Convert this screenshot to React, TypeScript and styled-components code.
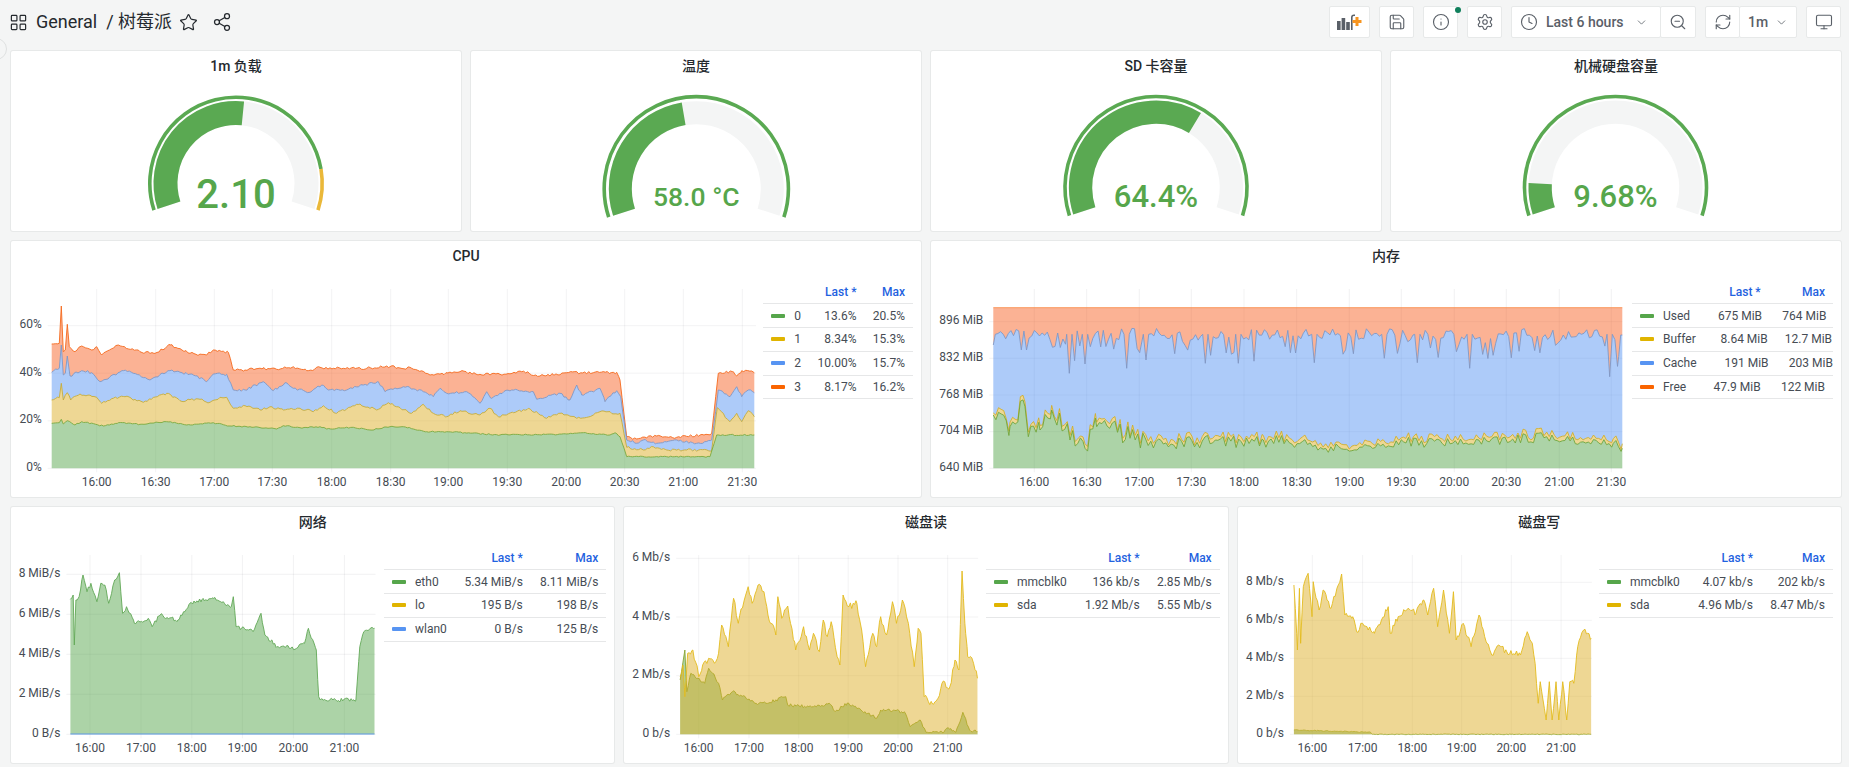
import React from "react";
import styled, { createGlobalStyle } from "styled-components";
import { ChevronDown, Clock, Info, LayoutGrid, Monitor, RefreshCw, Save, Settings, Share2, Star, ZoomOut } from "lucide-react";

const FONT = `Roboto, "Noto Sans CJK SC", "Liberation Sans", sans-serif`;
const GREEN = "#56A64B";
const YELLOW = "#E0B400";
const BLUE = "#5794F2";
const RED = "#FA6400";
const YELLOW_FILL = "#DCAD25";
const RED_FILL = "#F76225";

const Global = createGlobalStyle`
  html, body { margin: 0; padding: 0; background: #F4F5F5; }
  body { font-family: ${FONT}; color: #24292E; overflow: hidden; }
`;

const Page = styled.div`
  position: relative;
  width: 1849px;
  height: 767px;
  box-sizing: border-box;
  padding: 0 8px 0 11px;
  overflow: hidden;
  background: #F4F5F5;
  display: flex;
  flex-direction: column;
`;
const SideToggle = styled.div`
  position: absolute;
  left: -15px;
  top: 38px;
  width: 20px;
  height: 20px;
  border-radius: 50%;
  border: 1px solid #dfe1e1;
  background: #F4F5F5;
`;
const Header = styled.header`
  height: 51px;
  flex: none;
  display: flex;
  align-items: flex-start;
`;
const Crumbs = styled.div`
  display: flex;
  align-items: center;
  height: 44px;
  color: #24292E;
`;
const CrumbIcon = styled.span<{ $ml: number }>`
  display: inline-flex;
  margin-left: ${(p) => p.$ml}px;
  color: #24292E;
`;
const CrumbTitle = styled.div`
  font-size: 18px;
  line-height: 24px;
  white-space: pre;
  margin-left: 8px;
`;
const Tools = styled.div`
  margin-left: auto;
  margin-top: 6px;
  display: flex;
  gap: 9px;
`;
const ToolGroup = styled.div`
  display: flex;
`;
const ToolButton = styled.div<{ $w: number; $joined?: boolean; $start?: boolean }>`
  position: relative;
  box-sizing: border-box;
  width: ${(p) => p.$w}px;
  height: 32px;
  background: #fff;
  border: 1px solid #e7e9e9;
  border-radius: 2px;
  margin-left: ${(p) => (p.$joined ? "-1px" : "0")};
  padding-left: ${(p) => (p.$start ? "8px" : "0")};
  display: flex;
  align-items: center;
  justify-content: ${(p) => (p.$start ? "flex-start" : "center")};
  gap: 7px;
  color: #5a6068;
  font-size: 14px;
  font-weight: 500;
`;
const ToolText = styled.span<{ $ml?: number; $mr?: number }>`
  margin: 0 ${(p) => p.$mr ?? 0}px 0 ${(p) => p.$ml ?? 0}px;
  white-space: nowrap;
`;
const StatusDot = styled.span`
  position: absolute;
  right: -4px;
  top: 0;
  width: 6px;
  height: 6px;
  border-radius: 50%;
  background: #10805c;
`;
const Rows = styled.main`
  display: flex;
  flex-direction: column;
  gap: 10px;
`;
const Row = styled.div<{ $cols: number; $h: number }>`
  display: grid;
  grid-template-columns: repeat(${(p) => p.$cols}, minmax(0, 1fr));
  gap: 10px;
  height: ${(p) => p.$h}px;
  flex: none;
`;
const Panel = styled.section`
  position: relative;
  background: #fff;
  border-radius: 2px;
  box-shadow: 0 0 0 1px #e7e9e9;
  display: flex;
  flex-direction: column;
  min-width: 0;
`;
const PanelTitle = styled.h2`
  margin: 0 0 2px;
  height: 30px;
  flex: none;
  line-height: 20px;
  display: flex;
  align-items: center;
  justify-content: center;
  font-size: 14px;
  font-weight: 500;
  color: #24292E;
`;
const ChartBody = styled.div`
  display: flex;
  flex: 1;
  min-height: 0;
  padding-right: 8px;
`;
const ChartSvg = styled.svg`
  flex: none;
  display: block;
  text {
    font-family: ${FONT};
    font-size: 12px;
    fill: #464C54;
  }
`;
const GaugeSvg = styled.svg`
  display: block;
  text {
    font-family: ${FONT};
    font-weight: 500;
    fill: ${GREEN};
    text-anchor: middle;
  }
`;
const Legend = styled.div`
  flex: 1;
  min-width: 0;
  margin-top: 7px;
  font-size: 12px;
  color: #464C54;
`;
const LegendRow = styled.div<{ $cols: string; $head?: boolean }>`
  display: grid;
  grid-template-columns: ${(p) => p.$cols};
  align-items: center;
  box-sizing: border-box;
  height: ${(p) => (p.$head ? "24.3px" : "23.75px")};
  padding: 0 8px;
  border-bottom: 1px solid #e6e7e8;
  color: ${(p) => (p.$head ? "#1F62E0" : "#464C54")};
  font-weight: ${(p) => (p.$head ? 500 : 400)};
`;
const LegendName = styled.div`
  display: flex;
  align-items: center;
  gap: 9px;
  white-space: nowrap;
`;
const Swatch = styled.i<{ $color: string }>`
  display: block;
  width: 14px;
  height: 4px;
  background: ${(p) => p.$color};
  border-radius: 1px;
`;
const Num = styled.div`
  text-align: right;
  white-space: nowrap;
`;

type Pt = [number, number];

function rng(seed: number) {
  let a = seed >>> 0;
  return () => {
    a = (a + 0x6d2b79f5) >>> 0;
    let t = a;
    t = Math.imul(t ^ (t >>> 15), t | 1);
    t ^= t + Math.imul(t ^ (t >>> 7), t | 61);
    return ((t ^ (t >>> 14)) >>> 0) / 4294967296;
  };
}

interface TraceOpts {
  sx: number; // zoom x per page px
  ox: number; // page x origin
  oy: number; // page y origin
  step?: number;
  amp?: number | ((x: number) => number);
  seed?: number;
  dip?: number;
  dipDepth?: number;
}

// Control points are read off the reference; a light seeded jitter fills in between them.
function trace(ctrl: number[][], o: TraceOpts): Pt[] {
  const pts: Pt[] = ctrl.map(([x, y]) => [o.ox + x / o.sx, o.oy + y / 3]);
  const step = o.step ?? 2.5;
  const rand = rng(o.seed ?? 1);
  const out: Pt[] = [];
  for (let i = 0; i < pts.length - 1; i++) {
    const [x0, y0] = pts[i];
    const [x1, y1] = pts[i + 1];
    out.push([x0, y0]);
    for (let x = x0 + step; x < x1 - step * 0.4; x += step) {
      const amp = typeof o.amp === "function" ? o.amp(x) : o.amp ?? 0.6;
      let y = y0 + ((x - x0) / (x1 - x0)) * (y1 - y0) + (rand() - 0.5) * 2 * amp;
      if (o.dip && rand() < o.dip) y += rand() * (o.dipDepth ?? 10);
      out.push([x, y]);
    }
  }
  out.push(pts[pts.length - 1]);
  return out;
}

const linePath = (p: Pt[]) => p.map(([x, y], i) => `${i ? "L" : "M"}${x.toFixed(1)} ${y.toFixed(1)}`).join("");
const areaPath = (up: Pt[], low: Pt[]) =>
  linePath(up) + [...low].reverse().map(([x, y]) => `L${x.toFixed(1)} ${y.toFixed(1)}`).join("") + "Z";

interface Series {
  color: string;
  line: string;
  points: Pt[];
  lower?: Pt[];
  fill?: boolean;
}
interface ChartDef {
  title: string;
  left: number;
  top: number;
  svgWidth: number;
  x0: number;
  x1: number;
  gridRight: number;
  gridTop: number;
  y0: number;
  xLabelY: number;
  yTicks: [string, number][];
  xTicks: [string, number][];
  series: Series[];
  legendCols: string;
  legend: { name: string; color: string; last: string; max: string }[];
}

const Chart: React.FC<{ def: ChartDef }> = ({ def }) => {
  const h = 224;
  const vb = `${def.left} ${def.top + 32} ${def.svgWidth} ${h}`;
  return (
    <Panel>
      <PanelTitle>{def.title}</PanelTitle>
      <ChartBody>
        <ChartSvg width={def.svgWidth} height={h} viewBox={vb}>
          {def.yTicks.map(([t, y]) => (
            <g key={t}>
              <line x1={def.x0 - 4} x2={def.gridRight} y1={y} y2={y} stroke="#24292E" strokeOpacity={0.06} />
              <text x={def.x0 - 10} y={y + 2.6} textAnchor="end">{t}</text>
            </g>
          ))}
          {def.xTicks.map(([t, x]) => (
            <g key={t}>
              <line x1={x} x2={x} y1={def.gridTop} y2={def.y0 + 4} stroke="#24292E" strokeOpacity={0.06} />
              <text x={x} y={def.xLabelY} textAnchor="middle">{t}</text>
            </g>
          ))}
          {def.series.map((s, i) => {
            const base: Pt[] = s.lower ?? [[s.points[0][0], def.y0], [s.points[s.points.length - 1][0], def.y0]];
            return (
              <g key={i}>
                {s.fill !== false && <path d={areaPath(s.points, base)} fill={s.color} fillOpacity={0.49} />}
                <path d={linePath(s.points)} fill="none" stroke={s.line} strokeWidth={0.9} />
              </g>
            );
          })}
        </ChartSvg>
        <Legend>
          <LegendRow $cols={def.legendCols} $head>
            <span />
            <Num>Last *</Num>
            <Num>Max</Num>
          </LegendRow>
          {def.legend.map((l) => (
            <LegendRow key={l.name} $cols={def.legendCols}>
              <LegendName><Swatch $color={l.color} />{l.name}</LegendName>
              <Num>{l.last}</Num>
              <Num>{l.max}</Num>
            </LegendRow>
          ))}
        </Legend>
      </ChartBody>
    </Panel>
  );
};

const polar = (cx: number, cy: number, r: number, deg: number): Pt => {
  const a = (deg * Math.PI) / 180;
  return [cx + r * Math.sin(a), cy - r * Math.cos(a)];
};
const arc = (cx: number, cy: number, r: number, a0: number, a1: number) => {
  const [x0, y0] = polar(cx, cy, r, a0);
  const [x1, y1] = polar(cx, cy, r, a1);
  return `M${x0} ${y0}A${r} ${r} 0 ${a1 - a0 > 180 ? 1 : 0} 1 ${x1} ${y1}`;
};

interface GaugeDef {
  title: string;
  left: number;
  cx: number;
  cy: number;
  rTh: number;
  rVal: number;
  wVal: number;
  frac: number;
  warnFrac?: number;
  value: string;
  size: number;
  baseline: number;
}
const Gauge: React.FC<{ def: GaugeDef }> = ({ def }) => {
  const A0 = -108;
  const SWEEP = 216;
  const at = (f: number) => A0 + SWEEP * f;
  const { cx, cy } = def;
  return (
    <Panel>
      <PanelTitle>{def.title}</PanelTitle>
      <GaugeSvg width={450} height={148} viewBox={`${def.left} 83 450 148`}>
        <path d={arc(cx, cy, def.rVal, A0, at(1))} fill="none" stroke="#F4F5F5" strokeWidth={def.wVal} />
        <path d={arc(cx, cy, def.rVal, A0, at(def.frac))} fill="none" stroke="#5AA952" strokeWidth={def.wVal} />
        <path d={arc(cx, cy, def.rTh, A0, at(def.warnFrac ?? 1))} fill="none" stroke="#5AA952" strokeWidth={3.6} />
        {def.warnFrac !== undefined && (
          <path d={arc(cx, cy, def.rTh, at(def.warnFrac), at(1))} fill="none" stroke="#EAB839" strokeWidth={3.6} />
        )}
        <text x={cx} y={def.baseline} fontSize={def.size}>{def.value}</text>
      </GaugeSvg>
    </Panel>
  );
};

const gauges: GaugeDef[] = [
  { title: "1m 负载", left: 11, cx: 236, cy: 183.5, rTh: 86.2, rVal: 70.5, wVal: 24, frac: 0.526, warnFrac: 0.872, value: "2.10", size: 40, baseline: 208.3 },
  { title: "温度", left: 471, cx: 696.3, cy: 188.7, rTh: 92.1, rVal: 76, wVal: 23, frac: 0.4556, value: "58.0 °C", size: 26.5, baseline: 205.7 },
  { title: "SD 卡容量", left: 931, cx: 1156, cy: 187.5, rTh: 91, rVal: 75.4, wVal: 23.3, frac: 0.644, value: "64.4%", size: 31, baseline: 206.7 },
  { title: "机械硬盘容量", left: 1391, cx: 1615.5, cy: 187.5, rTh: 91, rVal: 75.4, wVal: 23.3, frac: 0.0968, value: "9.68%", size: 31, baseline: 206.7 },
];

/* ---------- CPU ---------- */
const cpuO = { sx: 3, ox: 0, oy: 240, step: 2 };
const cpuRed = trace([[155,312],[178,310],[184,198],[190,335],[196,330],[202,253],[208,320],[225,335],[245,318],[275,330],[290,320],[305,345],[355,315],[420,335],[465,340],[510,315],[570,340],[620,345],[640,330],[685,337],[700,390],[735,390],[750,385],[830,388],[880,380],[920,392],[960,382],[1000,385],[1100,385],[1170,380],[1235,385],[1290,405],[1380,395],[1440,403],[1500,403],[1565,395],[1620,408],[1700,398],[1780,398],[1850,397],[1860,420],[1880,590],[1910,597],[1970,588],[2030,592],[2100,585],[2135,580],[2155,400],[2200,395],[2210,408],[2225,392],[2263,398]], { ...cpuO, seed: 11, amp: 1.3 });
const cpuBlue = trace([[155,397],[178,385],[184,315],[190,405],[196,400],[202,348],[210,408],[245,392],[275,398],[300,425],[330,410],[370,392],[400,400],[450,420],[510,392],[580,405],[620,425],[640,402],[680,403],[700,450],[735,450],[790,425],[820,452],[855,428],[880,445],[930,457],[965,435],[985,450],[1040,450],[1090,435],[1135,425],[1155,455],[1210,440],[1270,455],[1300,470],[1320,445],[1340,460],[1400,455],[1440,490],[1460,455],[1475,475],[1500,460],[1535,450],[1600,455],[1610,478],[1680,460],[1710,480],[1730,435],[1745,465],[1800,445],[1815,485],[1850,452],[1862,470],[1880,600],[1910,610],[1930,600],[1970,610],[2030,600],[2090,610],[2135,600],[2155,450],[2190,470],[2210,440],[2225,470],[2245,450],[2263,458]], { ...cpuO, seed: 12, amp: 1.3 });
const cpuYellow = trace([[155,480],[178,473],[184,430],[190,480],[202,458],[212,480],[240,462],[290,472],[305,490],[340,475],[375,470],[430,487],[500,460],[540,482],[600,478],[630,487],[660,472],[680,472],[700,505],[735,497],[780,510],[810,500],[850,510],[900,505],[940,515],[970,497],[1010,520],[1040,507],[1080,492],[1130,510],[1165,488],[1200,503],[1235,520],[1270,493],[1300,520],[1340,530],[1380,512],[1440,525],[1470,505],[1495,530],[1540,518],[1585,505],[1640,535],[1680,520],[1730,535],[1780,525],[1800,515],[1860,520],[1880,622],[1930,630],[1960,620],[2000,630],[2060,630],[2135,630],[2152,503],[2190,545],[2210,520],[2225,545],[2245,512],[2263,530]], { ...cpuO, seed: 13, amp: 1.2 });
const cpuGreen = trace([[155,550],[178,548],[184,538],[190,552],[202,542],[225,555],[245,545],[310,558],[355,548],[420,553],[500,545],[560,555],[640,548],[690,558],[750,560],[830,567],[850,557],[900,563],[960,560],[980,567],[1060,562],[1110,570],[1170,560],[1210,560],[1280,575],[1340,575],[1500,585],[1540,583],[1600,585],[1700,582],[1750,578],[1830,585],[1845,578],[1860,590],[1880,650],[2000,650],[2100,650],[2130,650],[2150,585],[2263,585]], { ...cpuO, seed: 14, amp: 0.6 });

/* ---------- Memory ---------- */
const memO = { sx: 3, ox: 930, oy: 240, step: 2.6 };
const memDips: Pt[] = [[418,400],[465,372],[590,385],[648,360],[826,370],[925,370],[1153,368],[1363,355],[1462,368],[1619,385],[2039,410]];
const memBlueCtrl: number[][] = [[190,315],[196,283]];
memDips.forEach(([x, y]) => memBlueCtrl.push([x - 8, 283], [x, y], [x + 8, 283]));
memBlueCtrl.push([2066,350],[2072,285],[2077,285]);
const memBlue = trace(memBlueCtrl, { ...memO, seed: 21, amp: 6, dip: 0.3, dipDepth: 24 });
const memGreen = trace([[190,525],[240,560],[285,500],[295,590],[330,570],[365,510],[420,600],[465,625],[500,560],[600,595],[700,612],[1000,600],[1250,628],[1420,605],[1600,612],[1850,590],[2050,610],[2077,625]], { ...memO, seed: 22, amp: (x) => (x < 1150 ? 12 : x < 1300 ? 7 : 5) });
const memYellow: Pt[] = memGreen.map(([x, y], i) => [x, y - (i % 5 === 0 ? 2 : 4.6)]);
const memRedY = 240 + 203 / 3;
const memRed: Pt[] = [[930 + 190 / 3, memRedY], [1622.3, memRedY]];

/* ---------- Bottom row ---------- */
const netO = { sx: 2.529, ox: 0, oy: 500, step: 1.4 };
const netGreen = trace([[178,298],[185,285],[188,435],[192,300],[200,290],[210,225],[220,275],[230,250],[245,305],[255,250],[265,255],[275,310],[290,240],[302,218],[310,340],[320,320],[340,370],[375,355],[385,380],[405,345],[450,360],[480,310],[510,300],[540,295],[585,320],[590,290],[597,380],[640,395],[660,340],[670,405],[700,440],[750,445],[770,430],[780,385],[800,450],[806,590],[810,600],[900,600],[910,440],[920,395],[947,385]], { ...netO, seed: 31, amp: 2 });
const netBlue: Pt[] = [[70.4, 734], [374.5, 734]];

const readO = { sx: 2.529, ox: 620, oy: 500, step: 1.4 };
const readYellow = trace([[153,530],[160,495],[165,590],[172,460],[185,450],[200,530],[210,495],[225,475],[240,490],[250,460],[258,375],[275,440],[288,295],[300,370],[315,300],[325,260],[335,310],[350,255],[365,275],[375,345],[395,405],[400,290],[410,355],[425,318],[445,450],[465,380],[480,450],[490,400],[505,455],[515,360],[525,410],[535,365],[550,470],[557,495],[565,285],[580,320],[600,310],[612,390],[622,500],[640,400],[650,440],[660,350],[675,405],[690,305],[700,370],[715,300],[730,370],[745,500],[755,385],[762,400],[770,590],[790,610],[805,595],[815,550],[835,560],[848,480],[858,510],[866,213],[875,400],[880,470],[895,490],[905,535]], { ...readO, seed: 41, amp: 3.5 });
const readGreen = trace([[153,540],[165,450],[170,575],[180,520],[215,550],[225,505],[235,520],[250,550],[260,600],[285,575],[345,610],[370,610],[420,590],[425,615],[490,620],[530,610],[545,635],[575,610],[610,630],[650,655],[660,630],[720,635],[735,680],[760,660],[775,697],[820,697],[827,685],[850,697],[868,637],[885,690],[905,695]], { ...readO, seed: 42, amp: 1.6 });

const writeO = { sx: 2.533, ox: 1230, oy: 500, step: 1.4 };
const writeYellow = trace([[161,255],[170,450],[175,265],[178,430],[185,260],[197,220],[207,350],[210,245],[225,330],[235,270],[245,300],[255,325],[270,265],[282,222],[290,345],[310,350],[320,395],[335,370],[365,400],[400,320],[405,400],[425,350],[450,325],[470,340],[490,300],[500,345],[515,265],[525,380],[540,270],[555,400],[565,275],[572,420],[590,370],[610,440],[630,345],[650,430],[662,465],[680,435],[700,455],[735,465],[752,395],[765,430],[772,490],[780,610],[785,545],[800,660],[808,545],[815,660],[825,545],[832,660],[842,545],[852,660],[860,545],[870,550],[880,440],[895,390],[905,400],[914,415]], { ...writeO, seed: 51, amp: 3 });
const writeGreen = trace([[161,690],[355,697],[360,703],[914,703]], { ...writeO, seed: 52, amp: 0.4 });

const fullWide: ChartDef[] = [
  {
    title: "CPU", left: 11, top: 241, svgWidth: 752.3, x0: 51.7, x1: 754.3, gridRight: 756, gridTop: 289, y0: 468.3, xLabelY: 486,
    yTicks: [["0%", 468.3], ["20%", 420.8], ["40%", 373.2], ["60%", 325.7]],
    xTicks: [["16:00", 96.7], ["16:30", 155.7], ["17:00", 214.3], ["17:30", 272.3], ["18:00", 331.7], ["18:30", 390.7], ["19:00", 448.3], ["19:30", 507.3], ["20:00", 566.3], ["20:30", 624.7], ["21:00", 683.3], ["21:30", 742.3]],
    series: [
      { color: RED_FILL, line: "#F56A1D", points: cpuRed, lower: cpuBlue },
      { color: BLUE, line: "#7F96C4", points: cpuBlue, lower: cpuYellow },
      { color: YELLOW_FILL, line: "#C4AC3C", points: cpuYellow, lower: cpuGreen },
      { color: GREEN, line: "#7CA83C", points: cpuGreen },
    ],
    legendCols: "1fr 48px 48.5px",
    legend: [
      { name: "0", color: GREEN, last: "13.6%", max: "20.5%" },
      { name: "1", color: YELLOW, last: "8.34%", max: "15.3%" },
      { name: "2", color: BLUE, last: "10.00%", max: "15.7%" },
      { name: "3", color: RED, last: "8.17%", max: "16.2%" },
    ],
  },
  {
    title: "内存", left: 931, top: 241, svgWidth: 701, x0: 993.3, x1: 1622.3, gridRight: 1622.3, gridTop: 289, y0: 468.3, xLabelY: 486,
    yTicks: [["640 MiB", 468.3], ["704 MiB", 431.7], ["768 MiB", 395], ["832 MiB", 358.3], ["896 MiB", 321.7]],
    xTicks: [["16:00", 1034.3], ["16:30", 1086.7], ["17:00", 1139.3], ["17:30", 1191.3], ["18:00", 1244], ["18:30", 1296.7], ["19:00", 1349.3], ["19:30", 1401.3], ["20:00", 1454.3], ["20:30", 1506.3], ["21:00", 1559.3], ["21:30", 1611.3]],
    series: [
      { color: RED_FILL, line: "#F9904F", points: memRed, lower: memBlue },
      { color: BLUE, line: "#7F96C4", points: memBlue, lower: memYellow },
      { color: YELLOW_FILL, line: "#CFAE2E", points: memYellow, lower: memGreen },
      { color: GREEN, line: "#6EA53A", points: memGreen },
    ],
    legendCols: "1fr 72px 64.3px",
    legend: [
      { name: "Used", color: GREEN, last: "675 MiB", max: "764 MiB" },
      { name: "Buffer", color: YELLOW, last: "8.64 MiB", max: "12.7 MiB" },
      { name: "Cache", color: BLUE, last: "191 MiB", max: "203 MiB" },
      { name: "Free", color: RED, last: "47.9 MiB", max: "122 MiB" },
    ],
  },
];

const thirds: ChartDef[] = [
  {
    title: "网络", left: 11, top: 507, svgWidth: 373, x0: 70.4, x1: 374.5, gridRight: 375.5, gridTop: 555, y0: 734.3, xLabelY: 752,
    yTicks: [["0 B/s", 734.3], ["2 MiB/s", 694.3], ["4 MiB/s", 654.3], ["6 MiB/s", 614.3], ["8 MiB/s", 574.3]],
    xTicks: [["16:00", 90], ["17:00", 141], ["18:00", 191.8], ["19:00", 242.4], ["20:00", 293.4], ["21:00", 344.4]],
    series: [
      { color: GREEN, line: "#62A857", points: netGreen },
      { color: BLUE, line: BLUE, points: netBlue, fill: false },
    ],
    legendCols: "1fr 70px 75.5px",
    legend: [
      { name: "eth0", color: GREEN, last: "5.34 MiB/s", max: "8.11 MiB/s" },
      { name: "lo", color: YELLOW, last: "195 B/s", max: "198 B/s" },
      { name: "wlan0", color: BLUE, last: "0 B/s", max: "125 B/s" },
    ],
  },
  {
    title: "磁盘读", left: 624.33, top: 507, svgWidth: 361.7, x0: 680.5, x1: 977.8, gridRight: 978.5, gridTop: 555, y0: 734.3, xLabelY: 752,
    yTicks: [["0 b/s", 734.3], ["2 Mb/s", 675.7], ["4 Mb/s", 617], ["6 Mb/s", 558.3]],
    xTicks: [["16:00", 699], ["17:00", 749.3], ["18:00", 799], ["19:00", 848.5], ["20:00", 898.4], ["21:00", 948]],
    series: [
      { color: GREEN, line: "#8AA532", points: readGreen },
      { color: YELLOW_FILL, line: "#E3BB1E", points: readYellow },
    ],
    legendCols: "1fr 68px 72px",
    legend: [
      { name: "mmcblk0", color: GREEN, last: "136 kb/s", max: "2.85 Mb/s" },
      { name: "sda", color: YELLOW, last: "1.92 Mb/s", max: "5.55 Mb/s" },
    ],
  },
  {
    title: "磁盘写", left: 1237.67, top: 507, svgWidth: 361.3, x0: 1293.6, x1: 1590.8, gridRight: 1591.5, gridTop: 555, y0: 734.3, xLabelY: 752,
    yTicks: [["0 b/s", 734.3], ["2 Mb/s", 696.3], ["4 Mb/s", 658.3], ["6 Mb/s", 620.3], ["8 Mb/s", 582.3]],
    xTicks: [["16:00", 1312], ["17:00", 1362.3], ["18:00", 1412], ["19:00", 1461.3], ["20:00", 1511], ["21:00", 1560.8]],
    series: [
      { color: GREEN, line: "#9DB244", points: writeGreen },
      { color: YELLOW_FILL, line: "#E3BB1E", points: writeYellow },
    ],
    legendCols: "1fr 68px 72px",
    legend: [
      { name: "mmcblk0", color: GREEN, last: "4.07 kb/s", max: "202 kb/s" },
      { name: "sda", color: YELLOW, last: "4.96 Mb/s", max: "8.47 Mb/s" },
    ],
  },
];

const PanelAddIcon = () => (
  <svg width="25" height="16" viewBox="0 0 25 16">
    <g fill="#5a6068">
      <rect x="0" y="7" width="3.6" height="9" />
      <rect x="4.6" y="4" width="3.6" height="12" />
      <rect x="9.2" y="8" width="3.6" height="8" />
      <path d="M14 16V3.5a3 3 0 0 1 3-3h1v1.6h-1a1.4 1.4 0 0 0-1.4 1.4V16z" />
    </g>
    <path d="M20 3v9M15.5 7.5h9" stroke="#F79520" strokeWidth="3" />
  </svg>
);

const ICON = { strokeWidth: 1.5 };

export default function App() {
  return (
    <Page>
      <Global />
      <SideToggle />
      <Header>
        <Crumbs>
          <CrumbIcon $ml={-2}><LayoutGrid size={19} {...ICON} /></CrumbIcon>
          <CrumbTitle>General  / 树莓派</CrumbTitle>
          <CrumbIcon $ml={7}><Star size={19} {...ICON} /></CrumbIcon>
          <CrumbIcon $ml={14}><Share2 size={20} {...ICON} /></CrumbIcon>
        </Crumbs>
        <Tools>
          <ToolButton $w={41}><PanelAddIcon /></ToolButton>
          <ToolButton $w={35}><Save size={18} {...ICON} /></ToolButton>
          <ToolButton $w={35}><Info size={18} {...ICON} /><StatusDot /></ToolButton>
          <ToolButton $w={35}><Settings size={18} {...ICON} /></ToolButton>
          <ToolGroup>
            <ToolButton $w={150} $start>
              <Clock size={18} {...ICON} />
              <ToolText $ml={1} $mr={4}>Last 6 hours</ToolText>
              <ChevronDown size={13} {...ICON} />
            </ToolButton>
            <ToolButton $w={36} $joined><ZoomOut size={18} {...ICON} /></ToolButton>
          </ToolGroup>
          <ToolGroup>
            <ToolButton $w={35}><RefreshCw size={18} {...ICON} /></ToolButton>
            <ToolButton $w={58} $joined>
              <ToolText>1m</ToolText>
              <ChevronDown size={13} {...ICON} />
            </ToolButton>
          </ToolGroup>
          <ToolButton $w={35}><Monitor size={18} {...ICON} /></ToolButton>
        </Tools>
      </Header>
      <Rows>
        <Row $cols={4} $h={180}>
          {gauges.map((g) => <Gauge key={g.title} def={g} />)}
        </Row>
        <Row $cols={2} $h={256}>
          {fullWide.map((c) => <Chart key={c.title} def={c} />)}
        </Row>
        <Row $cols={3} $h={256}>
          {thirds.map((c) => <Chart key={c.title} def={c} />)}
        </Row>
      </Rows>
    </Page>
  );
}
